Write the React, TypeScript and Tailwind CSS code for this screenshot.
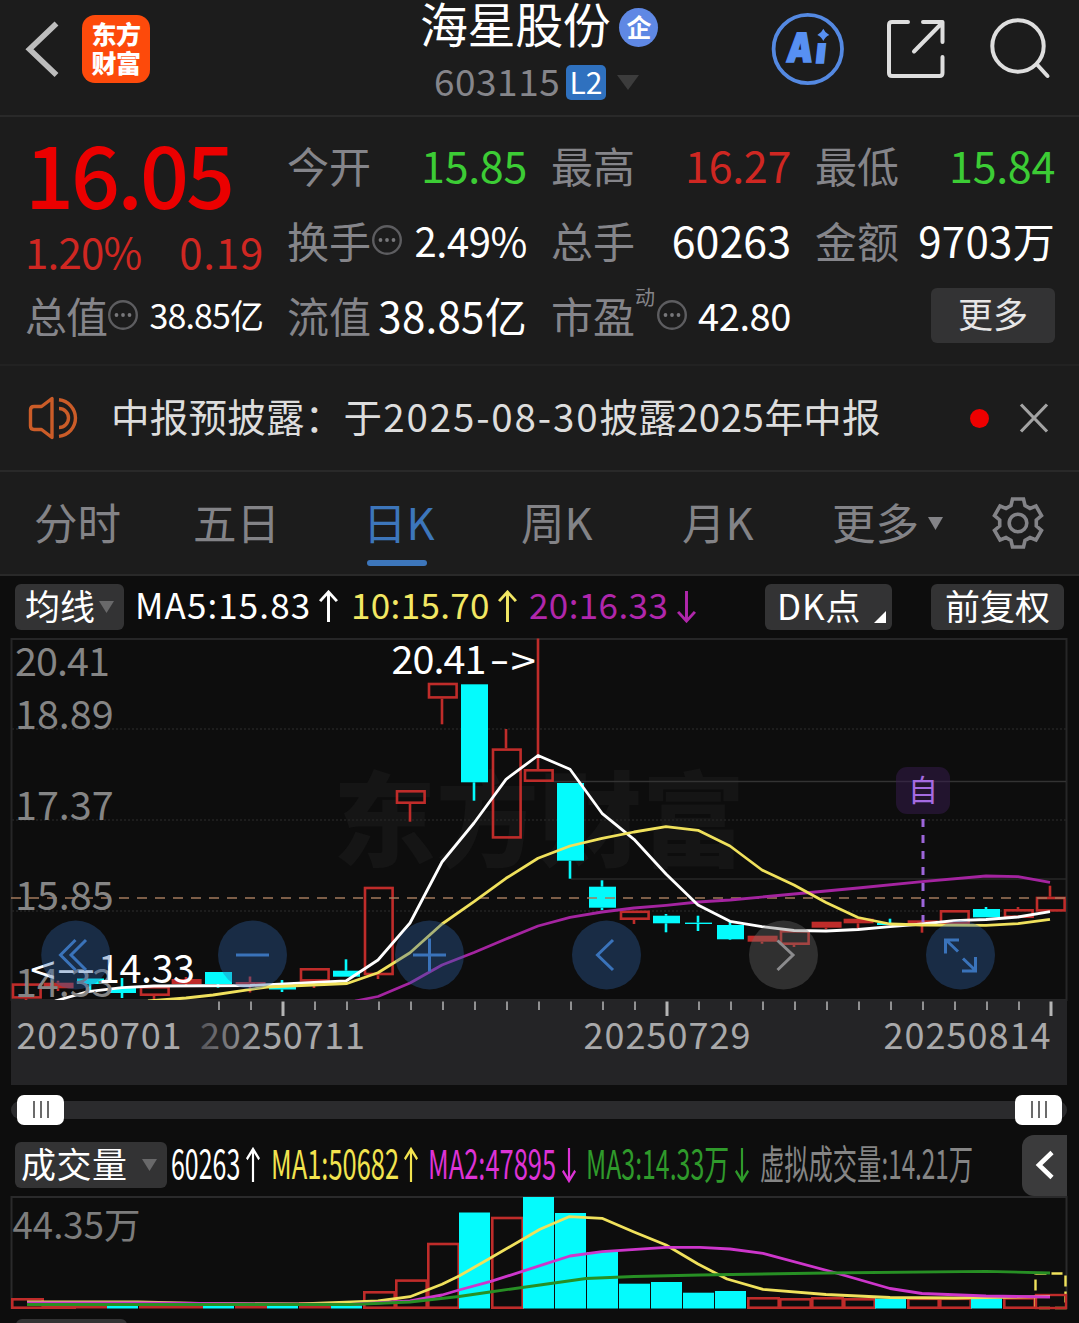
import React from 'react'

type Bar = {
  kind: 'hollow' | 'red' | 'cyan'
  top: number
  bottom: number
  high?: number
  low?: number
}

const RED = '#bf2c2a'
const CYAN = '#04fbfd'

const CANDLES: Bar[] = [
  { kind: 'hollow', top: 983.3, bottom: 998.7, low: 1000 },
  { kind: 'red', top: 982.7, bottom: 988.3, high: 980.7, low: 991 },
  { kind: 'cyan', top: 978.5, bottom: 984, low: 991 },
  { kind: 'cyan', top: 988, bottom: 993, high: 978, low: 998 },
  { kind: 'hollow', top: 986, bottom: 996, low: 999 },
  { kind: 'red', top: 979, bottom: 984, high: 977, low: 986 },
  { kind: 'cyan', top: 972, bottom: 984, low: 987.7 },
  { kind: 'red', top: 982, bottom: 986.5, high: 976.5, low: 992.5 },
  { kind: 'cyan', top: 986.7, bottom: 989.5, high: 980, low: 992 },
  { kind: 'hollow', top: 968, bottom: 981.7, low: 988 },
  { kind: 'cyan', top: 970.7, bottom: 976.7, high: 959.3 },
  { kind: 'hollow', top: 886.7, bottom: 975.3, low: 979 },
  { kind: 'hollow', top: 790, bottom: 804, low: 821.7 },
  { kind: 'hollow', top: 682.7, bottom: 698.7, low: 724.3 },
  { kind: 'cyan', top: 684.3, bottom: 782.3, low: 800.7 },
  { kind: 'hollow', top: 748.3, bottom: 838.7, high: 729 },
  { kind: 'hollow', top: 769, bottom: 782, high: 638.5 },
  { kind: 'cyan', top: 783, bottom: 860.7, low: 878.7 },
  { kind: 'cyan', top: 886.7, bottom: 907.7, high: 880.3, low: 910 },
  { kind: 'hollow', top: 910.5, bottom: 920, low: 924 },
  { kind: 'cyan', top: 915.7, bottom: 923.3, high: 914, low: 932.3 },
  { kind: 'cyan', top: 922.6, bottom: 924, high: 915.7, low: 931 },
  { kind: 'cyan', top: 925, bottom: 939.3, high: 921.7, low: 940 },
  { kind: 'red', top: 935.7, bottom: 941.7, low: 943.7 },
  { kind: 'hollow', top: 930, bottom: 945, low: 947 },
  { kind: 'red', top: 921.7, bottom: 927.7, low: 929.3 },
  { kind: 'red', top: 918.7, bottom: 923.3, low: 928.3 },
  { kind: 'cyan', top: 923, bottom: 925, high: 918.7 },
  { kind: 'red', top: 920.3, bottom: 924.7, low: 932.7 },
  { kind: 'hollow', top: 910, bottom: 924 },
  { kind: 'cyan', top: 909, bottom: 917.3, high: 907 },
  { kind: 'hollow', top: 909, bottom: 918, high: 907 },
  { kind: 'hollow', top: 896.7, bottom: 911.7, high: 885.7 },
]

const VOLUMES: { kind: Bar['kind']; top: number }[] = [
  { kind: 'hollow', top: 1298 },
  { kind: 'hollow', top: 1304 },
  { kind: 'red', top: 1306 },
  { kind: 'cyan', top: 1305.5 },
  { kind: 'red', top: 1306 },
  { kind: 'red', top: 1306 },
  { kind: 'cyan', top: 1305.5 },
  { kind: 'red', top: 1306 },
  { kind: 'cyan', top: 1305.5 },
  { kind: 'red', top: 1302 },
  { kind: 'cyan', top: 1305.5 },
  { kind: 'hollow', top: 1291 },
  { kind: 'hollow', top: 1279.3 },
  { kind: 'hollow', top: 1242.7 },
  { kind: 'cyan', top: 1212.5 },
  { kind: 'hollow', top: 1216.7 },
  { kind: 'cyan', top: 1197 },
  { kind: 'cyan', top: 1213 },
  { kind: 'cyan', top: 1252 },
  { kind: 'cyan', top: 1283.7 },
  { kind: 'cyan', top: 1282 },
  { kind: 'cyan', top: 1292.7 },
  { kind: 'cyan', top: 1291 },
  { kind: 'hollow', top: 1297 },
  { kind: 'hollow', top: 1298 },
  { kind: 'hollow', top: 1297 },
  { kind: 'hollow', top: 1298 },
  { kind: 'cyan', top: 1298.5 },
  { kind: 'hollow', top: 1297.5 },
  { kind: 'hollow', top: 1297.5 },
  { kind: 'cyan', top: 1298.5 },
  { kind: 'hollow', top: 1297 },
]

const MA5 =
  '55,1001 88,991.7 122,987.7 154,986 250,985.5 314,982.5 346,981 378,960 410,923 442,862 474,823 506,779.3 538,755.5 570,769.3 602,813.3 634,839.3 666,874 698,905 730,921.3 762,926.7 794,930.5 826,931 858,929.5 890,926.7 922,924 954,920.7 986,919.5 1018,917 1050,911.7'
const MA10 =
  '148,1001 186,998 213,995 267,987 347,983.5 378,972.7 410,952.7 442,924 474,901.7 506,878.3 538,858.3 570,846 602,838.3 634,832 666,826.7 698,830.3 730,846 762,870 794,885 826,902.5 858,917.5 890,924 922,925 986,925.3 1018,923.7 1050,919.3'
const MA20 =
  '355,1001 378,996.5 410,983 442,965 474,952.5 506,939 538,926 570,917.3 602,912 634,908 666,905.3 698,902 730,900 794,894 858,888 922,881.7 986,876 1018,876.7 1050,882.3'

const VMA1 =
  '27,1302 138,1302 200,1303.5 300,1304 378,1301 410,1296.7 442,1284.3 459,1276 490,1258.3 540,1229.3 569,1216.7 602,1218.3 634,1232 666,1245 698,1264 727,1279 763,1289.3 826,1294.5 890,1297.5 954,1298 1050,1296.5'
const VMA2 =
  '27,1303 138,1303 350,1304.5 410,1301 442,1295 459,1290 490,1281.7 540,1265.7 570,1256 602,1251.7 666,1247.3 700,1247.3 730,1249 763,1253.3 829,1271 890,1288.5 922,1293.5 986,1296 1050,1297'
const VMA3 =
  '27,1304.5 350,1304.5 410,1302 459,1296.5 490,1292 540,1285 586,1278.5 634,1276.5 700,1275 826,1273 986,1271.3 1050,1273'

function InfoDot() {
  return (
    <svg width="32" height="32" viewBox="0 0 32 32" className="shrink-0">
      <circle cx="16" cy="16" r="13.8" fill="none" stroke="#5d5d60" strokeWidth="2.4" />
      <circle cx="9.5" cy="16" r="1.9" fill="#77777a" />
      <circle cx="16" cy="16" r="1.9" fill="#77777a" />
      <circle cx="22.5" cy="16" r="1.9" fill="#77777a" />
    </svg>
  )
}

function Arrow({ down, className }: { down?: boolean; className: string }) {
  return (
    <svg
      viewBox="0 0 18 34"
      preserveAspectRatio="none"
      fill="none"
      stroke="currentColor"
      strokeWidth="2.8"
      className={className}
    >
      {down ? (
        <path d="M9 1 V32 M1 22.5 L9 32 L17 22.5" />
      ) : (
        <path d="M9 33 V2 M1 11.5 L9 2 L17 11.5" />
      )}
    </svg>
  )
}

function Caret({ className }: { className: string }) {
  return (
    <svg viewBox="0 0 10 8" preserveAspectRatio="none" className={className}>
      <path d="M0 0 H10 L5 8 Z" fill="currentColor" />
    </svg>
  )
}

function Header() {
  return (
    <header className="flex h-[117px] justify-between border-b-2 border-[#292929]">
      <div className="flex w-[400px] pt-[15px] pl-[24px]">
        <svg width="38" height="68" viewBox="24 15 38 68" fill="none">
          <path d="M56.5 23.5 L29.5 49.3 L56.5 75" stroke="#bdbdbd" strokeWidth="5.6" />
        </svg>
        <div className="ml-5 flex h-[68px] w-[68px] flex-col items-center justify-center rounded-[13px] bg-[#fd4a0b] pb-[3px] text-[25px] leading-[29px] font-black tracking-[-0.5px] text-white">
          <span>东方</span>
          <span>财富</span>
        </div>
      </div>
      <div className="flex w-[260px] flex-col">
        <div className="flex h-[49px] items-center pl-[20px]">
          <span className="pb-[5px] text-[48px] leading-[48px] tracking-[-0.4px] text-white">海星股份</span>
          <span className="mt-[5px] ml-[9px] flex h-[39px] w-[39px] items-center justify-center rounded-full bg-[#5f88e4] pb-[2px] text-[25px] leading-none font-bold text-white">
            企
          </span>
        </div>
        <div className="flex h-[66px] items-center pl-[33px]">
          <span className="w-[133px] pb-[4px] pl-[1px] text-[37px] leading-none tracking-[0.5px] text-[#85858a]">
            603115
          </span>
          <span className="flex h-[35px] w-[40px] items-center justify-center rounded-[5px] bg-[#2f71bf] pb-[3px] text-[30px] leading-none text-white">
            L2
          </span>
          <Caret className="ml-[11px] h-[15px] w-[22px] text-[#3c3c3c]" />
        </div>
      </div>
      <div className="flex w-[419px] pt-[12px] pl-[110px]">
        <svg width="300" height="76" viewBox="770 12 300 76" fill="none">
          <circle cx="807.8" cy="49" r="34.2" stroke="#5489e2" strokeWidth="3.8" />
          <g
            fontSize="40"
            fontWeight="900"
            fontFamily="Inter, sans-serif"
            fill="#5790f2"
            stroke="#5790f2"
            strokeWidth="1.6"
          >
            <text transform="translate(785.8 61.6) skewX(-6)" textLength="26" lengthAdjust="spacingAndGlyphs">
              A
            </text>
            <text transform="translate(814.8 63.4) skewX(-6)" fontSize="35">
              ı
            </text>
          </g>
          <path d="M823.3 28.8 Q825 33 829.3 34.9 Q825 36.8 823.3 41 Q821.6 36.8 817.3 34.9 Q821.6 33 823.3 28.8Z" fill="#5790f2" />
          <g stroke="#dedede" strokeWidth="4" strokeLinecap="round" strokeLinejoin="round">
            <path d="M908 22 H892 Q889 22 889 25 V73 Q889 76 892 76 H939.5 Q942.5 76 942.5 73 V57" />
            <path d="M923 22 H942.5 V42 M941 24 L914 51.5" />
            <circle cx="1018" cy="46" r="25.7" />
            <path d="M1037 64.5 L1047.5 76" />
          </g>
        </svg>
      </div>
    </header>
  )
}

function Cell({ label, children }: { label: React.ReactNode; children: React.ReactNode }) {
  return (
    <div className="flex items-center justify-between">
      <div className="flex items-center text-[#85858a]">{label}</div>
      {children}
    </div>
  )
}

function Quote() {
  return (
    <section className="flex h-[249px] border-b-2 border-[#222222] pt-[10px] pl-[25px] text-[42px] leading-none whitespace-nowrap">
      <div className="w-[239px]">
        <div className="flex h-[89px] items-center text-[86px] font-medium tracking-[-2.9px] text-[#eb0000]">
          16.05
        </div>
        <div className="flex h-[69px] items-center justify-between text-[#cf2722]">
          <span className="tracking-[-0.8px]">1.20%</span>
          <span className="tracking-[0.8px]">0.19</span>
        </div>
        <div className="flex h-[59px] items-center justify-between">
          <div className="flex items-center text-[#85858a]">
            <span className="w-[82px] tracking-[-1px]">总值</span>
            <InfoDot />
          </div>
          <span className="pr-[1px] text-[34px] tracking-[-0.9px] text-white">38.85亿</span>
        </div>
      </div>
      <div className="ml-[23px] grid grid-cols-[240px_240px_240px] auto-rows-[75px] gap-x-[24px] text-[43px] text-white">
        <Cell label={<span className="text-[42px]">今开</span>}>
          <span className="tracking-[-0.3px] text-[#3ccc35]">15.85</span>
        </Cell>
        <Cell label={<span className="text-[42px]">最高</span>}>
          <span className="tracking-[-0.3px] text-[#cf2722]">16.27</span>
        </Cell>
        <Cell label={<span className="text-[42px]">最低</span>}>
          <span className="tracking-[-0.3px] text-[#3ccc35]">15.84</span>
        </Cell>
        <Cell
          label={
            <>
              <span className="text-[42px]">换手</span>
              <InfoDot />
            </>
          }
        >
          <span className="text-[40px] tracking-[-0.4px]">2.49%</span>
        </Cell>
        <Cell label={<span className="text-[42px]">总手</span>}>
          <span>60263</span>
        </Cell>
        <Cell label={<span className="text-[42px]">金额</span>}>
          <span className="text-[42px] tracking-[0.3px]">9703万</span>
        </Cell>
        <Cell label={<span className="text-[42px]">流值</span>}>
          <span className="text-[42px] tracking-[0.3px]">38.85亿</span>
        </Cell>
        <Cell
          label={
            <>
              <span className="text-[42px]">市盈</span>
              <span className="mb-[36px] w-[21px] text-[20px]">动</span>
              <InfoDot />
            </>
          }
        >
          <span className="text-[38px] tracking-[-0.4px]">42.80</span>
        </Cell>
        <div className="flex items-center justify-end">
          <button className="mt-[2px] h-[55px] w-[124px] rounded-[6px] bg-[#333334] pb-[6px] text-[35px] leading-none text-[#e6e6e6]">
            更多
          </button>
        </div>
      </div>
    </section>
  )
}

function Notice() {
  return (
    <section className="flex h-[106px] items-center border-b-2 border-[#292929] pl-[27px]">
      <svg width="54" height="46" viewBox="27 395 54 46" fill="none" stroke="#cb5c28" strokeWidth="3.4">
        <path d="M52 398.5 V437.5 L41.5 429.5 H34 Q30.5 429.5 30.5 426 V410 Q30.5 406.5 34 406.5 H41.5 Z" strokeLinejoin="round" />
        <path d="M59 408.5 A9.5 9.5 0 0 1 59 427.5 M59 399.8 A18.4 18.4 0 0 1 59 436.4" />
      </svg>
      <div className="ml-[30px] w-[859px] pb-[5px] text-[38.5px] leading-none tracking-[0.25px] whitespace-nowrap text-[#dddddd]">
        中报预披露：于<span className="pl-[1px] tracking-[1.85px]">2025-08-30</span>披露
        <span className="tracking-[0.5px]">2025</span>年中报
      </div>
      <span className="h-[19px] w-[19px] rounded-full bg-[#ee0000]" />
      <svg width="30" height="30" viewBox="0 0 30 30" className="ml-[30px]">
        <path d="M2 1.5 L28 28.5 M28 1.5 L2 28.5" stroke="#a3a3a3" strokeWidth="3.2" />
      </svg>
    </section>
  )
}

function Tabs() {
  return (
    <nav className="flex h-[104px] border-b-2 border-[#292929] pt-[8px] pl-[34px] text-[43.5px] leading-[84px] whitespace-nowrap text-[#838387]">
      <span className="w-[159px]">分时</span>
      <span className="w-[170px]">五日</span>
      <div className="flex w-[158px] flex-col">
        <span className="h-[80px] text-[#3d76bb]">日K</span>
        <span className="ml-[4px] h-[6px] w-[60px] rounded-full bg-[#3d76bb]" />
      </div>
      <span className="w-[161px]">周K</span>
      <span className="w-[150px]">月K</span>
      <div className="flex w-[160px] items-start">
        更多
        <Caret className="mt-[37px] ml-[9px] h-[13px] w-[15px]" />
      </div>
      <svg width="54" height="54" viewBox="-27 -27 54 54" className="mt-[16px] -ml-px" fill="none" stroke="#838387" strokeWidth="3.6">
        <path d="M-5.5 -24 H5.5 L7 -17.5 L12 -14.6 L18 -17 L23.5 -7.5 L18.3 -3 V3 L23.5 7.5 L18 17 L12 14.6 L7 17.5 L5.5 24 H-5.5 L-7 17.5 L-12 14.6 L-18 17 L-23.5 7.5 L-18.3 3 V-3 L-23.5 -7.5 L-18 -17 L-12 -14.6 L-7 -17.5 Z" />
        <circle r="8.8" />
      </svg>
    </nav>
  )
}

function IndicatorBar() {
  return (
    <div className="flex h-[63px] items-center pl-[15px] text-[35px] leading-none whitespace-nowrap">
      <button className="flex h-[46px] w-[109px] items-center rounded-[6px] bg-[#333334] pl-[10px] text-left text-white">
        <span className="pb-[5px]">均线</span>
        <Caret className="ml-[4px] h-[12px] w-[15px] text-[#69696a]" />
      </button>
      <span className="ml-[11px] w-[184px] pb-[7px] tracking-[1.1px] text-white">MA5:15.83</span>
      <Arrow className="h-[33px] w-[19px] text-white" />
      <span className="ml-[13px] w-[147px] pb-[7px] tracking-[0.35px] text-[#f2e763]">10:15.70</span>
      <Arrow className="h-[33px] w-[19px] text-[#f2e763]" />
      <span className="ml-[12px] w-[148px] pb-[7px] tracking-[0.4px] text-[#b027ab]">20:16.33</span>
      <Arrow down className="h-[33px] w-[19px] text-[#b027ab]" />
      <button className="ml-[69px] flex h-[46px] w-[127px] items-center rounded-[6px] bg-[#333334] pl-[12px] text-left text-white">
        <span className="w-[97px] pb-[5px] tracking-[0.8px]">DK点</span>
        <svg width="12" height="12" viewBox="0 0 11 11" className="mt-[20px]">
          <path d="M11 0 V11 H0 Z" fill="#fff" />
        </svg>
      </button>
      <button className="ml-[39px] h-[46px] w-[133px] rounded-[6px] bg-[#333334] pb-[5px] leading-none text-white">
        前复权
      </button>
    </div>
  )
}

function Candle({ bar, x }: { bar: Bar; x: number }) {
  const color = bar.kind === 'cyan' ? CYAN : RED
  return (
    <g stroke={color} strokeWidth="2.6">
      {bar.high && <path d={`M${x} ${bar.high} V${bar.top}`} />}
      {bar.low && <path d={`M${x} ${bar.bottom} V${bar.low}`} />}
      {bar.kind === 'hollow' ? (
        <rect x={x - 13} y={bar.top + 1.3} width="27.6" height={bar.bottom - bar.top - 2.6} fill="none" />
      ) : (
        <rect
          x={bar.kind === 'red' ? x - 14.4 : x - 13}
          y={bar.top}
          width={bar.kind === 'red' ? 30 : 27}
          height={bar.bottom - bar.top}
          fill={color}
          stroke="none"
        />
      )}
    </g>
  )
}

function PriceChart() {
  const ticks = Array.from({ length: 27 }, (_, i) => 219 + i * 32)
  const buttons = [75.7, 252.5, 429.5, 606.5, 783.5, 960.5]
  return (
    <svg width="1079" height="447" viewBox="0 638 1079 447" className="block" fill="none">
      <defs>
        <linearGradient id="fade" x1="200" x2="262" y1="0" y2="0" gradientUnits="userSpaceOnUse">
          <stop offset="0" stopColor="#55555a" />
          <stop offset="1" stopColor="#a9a9aa" />
        </linearGradient>
      </defs>
      <text x="333" y="859" fontSize="103" fontWeight="900" fill="#151515" textLength="412">
        东方财富
      </text>
      <rect x="11.5" y="639" width="1055" height="361" stroke="#262627" strokeWidth="2" />
      <path d="M12 729 H1066 M12 820 H1066 M12 911 H1066" stroke="#232323" strokeWidth="1.4" strokeDasharray="2 2" />
      <path d="M554 781.5 H1066" stroke="#333333" strokeWidth="1.6" />
      <path d="M571 879 H1066" stroke="#272727" strokeWidth="1.6" />

      {CANDLES.map((bar, i) => (
        <Candle key={i} bar={bar} x={26 + i * 32} />
      ))}
      <path d="M11 898 H1066" stroke="#a37a5c" strokeOpacity="0.75" strokeWidth="2" strokeDasharray="10 8" />

      <g strokeWidth="2.8" strokeLinejoin="round">
        <polyline points={MA20} stroke="#a424a0" />
        <polyline points={MA5} stroke="#ffffff" />
        <polyline points={MA10} stroke="#f0e15c" />
      </g>

      <g fontSize="39.5" fill="#858585">
        <text x="15" y="676" textLength="95">20.41</text>
        <text x="15" y="729">18.89</text>
        <text x="15" y="820">17.37</text>
        <text x="15" y="910">15.85</text>
        <text x="15" y="997">14.33</text>
      </g>
      <g fontSize="39.5" fill="#ffffff">
        <text x="391.5" y="674" textLength="95">20.41</text>
        <text x="489.5" y="674" textLength="20" lengthAdjust="spacingAndGlyphs">-</text>
        <text x="510.5" y="676" textLength="25.5" lengthAdjust="spacingAndGlyphs">&gt;</text>
        <text x="30" y="985" textLength="25.5" lengthAdjust="spacingAndGlyphs">&lt;</text>
        <text x="56.5" y="983" textLength="39" lengthAdjust="spacingAndGlyphs">--</text>
        <text x="98" y="983" textLength="97">14.33</text>
      </g>

      <rect x="896" y="767" width="54" height="47" rx="11" fill="#371c50" fillOpacity="0.5" />
      <text x="908" y="801" fontSize="30" fill="#a56be2">自</text>
      <path d="M923 819 V922" stroke="#9d66da" strokeWidth="3" strokeDasharray="8 8" />

      {buttons.map((cx, i) => (
        <circle key={cx} cx={cx} cy="955" r="34.5" fill={i === 4 ? '#707070' : '#2f63aa'} fillOpacity="0.36" />
      ))}
      <g stroke="#3a73ba" strokeWidth="3">
        <path d="M75.5 940 L60.5 955 L75.5 970 M86 940 L71 955 L86 970" />
        <path d="M236 955 H269" />
        <path d="M413 955 H446 M429.5 938.5 V971.5" />
        <path d="M613 940 L597.5 955 L613 970" />
        <path d="M777.5 940.5 L793 955 L777.5 970" stroke="#8b8b8d" />
        <path d="M958 951.5 L946 940 M959 940 H945.5 V953.5 M963 958.5 L975 970 M962 971 H975.5 V957" strokeWidth="3" />
      </g>

      <rect x="11" y="1000" width="1056" height="85" fill="#242426" />
      {ticks.map((x, i) => {
        const major = i === 2 || i === 14 || i === 26
        return (
          <path
            key={x}
            d={`M${x} 1001.5 V${major ? 1016 : 1010}`}
            stroke={major ? '#b5b5b5' : '#919192'}
            strokeWidth={major ? 3 : 2}
          />
        )
      })}
      <g fontSize="36" fill="#a9a9aa">
        <text x="16.5" y="1049" textLength="165">20250701</text>
        <text x="200" y="1049" textLength="165" fill="url(#fade)">20250711</text>
        <text x="583.5" y="1049" textLength="167">20250729</text>
        <text x="883.5" y="1049" textLength="167">20250814</text>
      </g>
    </svg>
  )
}

function Thumb() {
  return (
    <div className="flex h-[30px] w-[47px] items-center justify-center gap-[5px] rounded-[7px] bg-white">
      <span className="h-[17px] w-[2px] bg-[#6b6b6b]" />
      <span className="h-[17px] w-[2px] bg-[#6b6b6b]" />
      <span className="h-[17px] w-[2px] bg-[#6b6b6b]" />
    </div>
  )
}

function RangeSlider() {
  return (
    <div className="flex h-[49px] items-center px-[11px]">
      <div className="flex h-[18px] w-[1056px] items-center justify-between rounded-full bg-[#2b2b2d] pr-[5px] pl-[6px]">
        <Thumb />
        <Thumb />
      </div>
    </div>
  )
}

function VolumeBar() {
  return (
    <div className="flex h-[62px] items-center pl-[15px] text-[40px] leading-none whitespace-nowrap">
      <button className="flex h-[46px] w-[152px] items-center rounded-[6px] bg-[#333334] pl-[6px] text-left text-[35px] text-white">
        <span className="w-[121px] pb-[5px] tracking-[0.5px]">成交量</span>
        <Caret className="h-[12px] w-[15px] text-[#69696a]" />
      </button>
      <div className="ml-[4px] w-[75px] pb-[7px] text-white">
        <span className="inline-block origin-left scale-x-[0.625]">60263</span>
      </div>
      <Arrow className="h-[36px] w-[14px] text-white" />
      <div className="ml-[11px] w-[133px] pb-[7px] text-[#f2e34f]">
        <span className="inline-block origin-left scale-x-[0.637]">MA1:50682</span>
      </div>
      <Arrow className="h-[36px] w-[14px] text-[#f2e34f]" />
      <div className="ml-[10px] w-[134px] pb-[7px] text-[#dd33d6]">
        <span className="inline-block origin-left scale-x-[0.637]">MA2:47895</span>
      </div>
      <Arrow down className="h-[36px] w-[14px] text-[#dd33d6]" />
      <div className="ml-[10px] w-[149px] pb-[7px] text-[#2f9a2b]">
        <span className="inline-block origin-left scale-x-[0.622]">MA3:14.33万</span>
      </div>
      <Arrow down className="h-[36px] w-[14px] text-[#2f9a2b]" />
      <div className="ml-[11px] w-[262px] pb-[7px] text-[#858585]">
        <span className="inline-block origin-left scale-x-[0.607]">虚拟成交量:14.21万</span>
      </div>
      <button className="flex h-[61px] w-[45px] items-center justify-center rounded-l-[12px] bg-[#3b3b3c]">
        <svg width="22" height="32" viewBox="0 0 22 32">
          <path d="M18 3.5 L5 16 L18 28.5" fill="none" stroke="#fff" strokeWidth="4.6" />
        </svg>
      </button>
    </div>
  )
}

function VolumeChart() {
  return (
    <svg width="1079" height="127" viewBox="0 1196 1079 127" className="block" fill="none">
      <path d="M11.5 1309 V1197 H1066.5 V1309" stroke="#2a2a2b" strokeWidth="2" />
      <text x="12.5" y="1239" fontSize="36.5" fill="#7c7c7c" textLength="128">
        44.35万
      </text>
      {VOLUMES.map((v, i) => {
        const x = 11 + i * 32
        return v.kind === 'hollow' ? (
          <rect key={i} x={x + 1.3} y={v.top + 1.3} width="30.4" height={1309 - v.top - 2.6} stroke={RED} strokeWidth="2.6" />
        ) : (
          <rect
            key={i}
            x={x}
            y={v.top}
            width={v.kind === 'cyan' ? 31 : 32}
            height={1308.5 - v.top}
            fill={v.kind === 'cyan' ? CYAN : RED}
          />
        )
      })}
      {/* today's bar, with the projected volume dashed around it */}
      <rect x="1035.5" y="1273.5" width="30" height="34.5" stroke="#f0e15c" strokeWidth="2.4" strokeDasharray="11 5" />
      <rect x="1036" y="1295" width="30" height="13" stroke={RED} strokeWidth="2.4" />
      <g strokeWidth="2.8" strokeLinejoin="round">
        <polyline points={VMA1} stroke="#f0e15c" />
        <polyline points={VMA2} stroke="#cd36cb" />
        <polyline points={VMA3} stroke="#278f24" />
      </g>
      <rect x="16" y="1319" width="111" height="20" rx="6" fill="#333334" />
    </svg>
  )
}

export default function App() {
  return (
    <main className="h-[1323px] w-[1079px] overflow-hidden bg-[#0d0d0d] font-['Noto_Sans_CJK_SC',sans-serif]">
      <div className="bg-[#1c1c1c]">
        <Header />
        <Quote />
        <Notice />
        <Tabs />
      </div>
      <div className="-mt-px">
        <IndicatorBar />
      </div>
      <PriceChart />
      <RangeSlider />
      <VolumeBar />
      <VolumeChart />
    </main>
  )
}
